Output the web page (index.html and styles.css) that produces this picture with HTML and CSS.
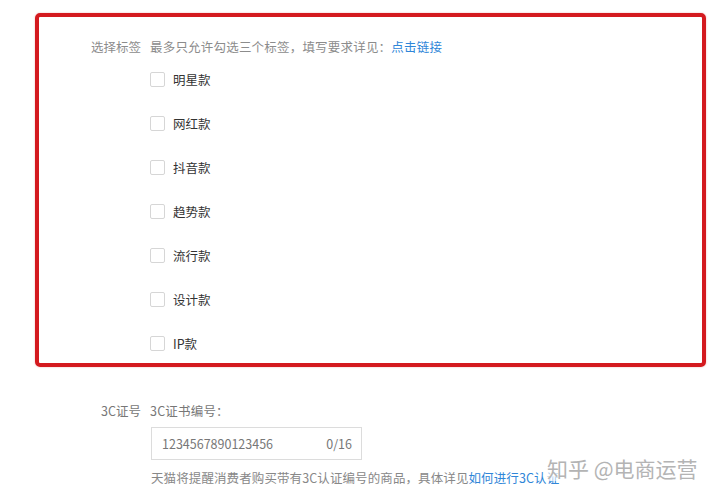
FILE: index.html
```html
<!DOCTYPE html>
<html lang="zh-CN">
<head>
    <meta charset="UTF-8">
    <meta name="viewport" content="width=device-width, initial-scale=1.0">
    <title>选择标签</title>
    <link rel="stylesheet" href="styles.css">
</head>
<body>
    <div class="page">
        <section class="tag-box">
            <div class="form-row">
                <span class="form-label">选择标签</span>
                <span class="form-tip">最多只允许勾选三个标签，填写要求详见：<a href="#" class="link">点击链接</a></span>
            </div>
            <div class="tag-list">
                <label class="tag-option"><input type="checkbox"><span>明星款</span></label>
                <label class="tag-option"><input type="checkbox"><span>网红款</span></label>
                <label class="tag-option"><input type="checkbox"><span>抖音款</span></label>
                <label class="tag-option"><input type="checkbox"><span>趋势款</span></label>
                <label class="tag-option"><input type="checkbox"><span>流行款</span></label>
                <label class="tag-option"><input type="checkbox"><span>设计款</span></label>
                <label class="tag-option"><input type="checkbox"><span>IP款</span></label>
            </div>
        </section>

        <section class="cert">
            <div class="form-row">
                <span class="form-label">3C证号</span>
                <span class="form-tip">3C证书编号：</span>
            </div>
            <div class="cert-body">
                <div class="input-box">
                    <span class="input-value">1234567890123456</span>
                    <span class="input-count">0/16</span>
                </div>
                <p class="help">天猫将提醒消费者购买带有3C认证编号的商品，具体详见<a href="#" class="link">如何进行3C认证</a></p>
            </div>
        </section>
    </div>
    <div class="watermark">知乎 @电商运营</div>
</body>
</html>
```

FILE: styles.css
```css
body {
    margin: 0;
    background-color: #fff;
    font-family: "Noto Sans CJK SC", "Noto Sans", sans-serif;
    color: #333;
    width: 720px;
    height: 500px;
    overflow: hidden;
    position: relative;
}
.page {
    padding-top: 13px;
}
.link {
    color: #2f86d8;
    text-decoration: none;
}
.tag-box {
    margin-left: 35px;
    width: 671px;
    height: 354px;
    box-sizing: border-box;
    border: 4px solid #d41a1f;
    border-radius: 5px;
    box-shadow: 0 0 2px rgba(212, 26, 31, 0.35);
    padding-top: 21px;
}
.form-row {
    display: flex;
    align-items: center;
    height: 18px;
    font-size: 12.5px;
    line-height: 18px;
}
.form-label {
    width: 102px;
    margin-right: 9px;
    text-align: right;
    color: #8c8c8c;
}
.form-tip {
    color: #8c8c8c;
    letter-spacing: 0.2px;
}
.tag-list {
    display: flex;
    flex-direction: column;
    padding-left: 111px;
    margin-top: 1px;
}
.tag-option {
    display: flex;
    align-items: center;
    height: 44px;
    font-size: 12.5px;
    color: #333;
}
.tag-option input {
    appearance: none;
    -webkit-appearance: none;
    width: 15px;
    height: 15px;
    margin: 0 8px 0 0;
    border: 1px solid #d6d6d6;
    border-radius: 2px;
    background-color: #fff;
}
.cert {
    margin-top: 35px;
    margin-left: 39px;
}
.cert .form-label {
    color: #777;
}
.cert .form-tip {
    color: #777;
}
.cert-body {
    padding-left: 112px;
    margin-top: 7px;
}
.input-box {
    width: 211px;
    height: 33px;
    box-sizing: border-box;
    border: 1px solid #dcdcdc;
    display: flex;
    align-items: center;
    justify-content: space-between;
    padding: 0 9px 0 10px;
    font-size: 12.5px;
    color: #777;
}
.help {
    margin: 9px 0 0;
    font-size: 12.5px;
    line-height: 18px;
    color: #888;
    white-space: nowrap;
    letter-spacing: 0.1px;
}
.watermark {
    position: absolute;
    left: 547px;
    top: 455px;
    font-size: 21px;
    line-height: 26px;
    color: #b4b4b4;
    text-shadow: 0 0 2px #fff, 0 0 3px #fff;
    background: rgba(255, 255, 255, 0.55);
}
```
